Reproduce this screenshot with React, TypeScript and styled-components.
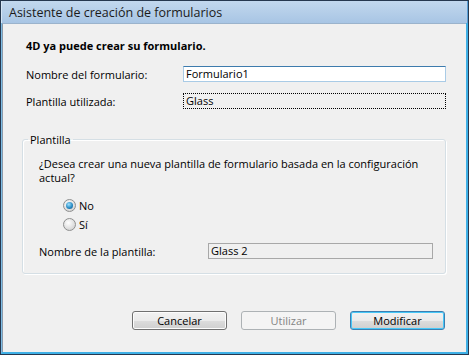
import React from 'react';
import styled, { createGlobalStyle } from 'styled-components';

const Global = createGlobalStyle`
  html, body { margin: 0; padding: 0; background: #f0f0f0; }
  body {
    width: 469px; height: 355px; overflow: hidden;
    font-family: "Open Sans", "Noto Sans", sans-serif;
    font-size: 11px; color: #000;
  }
  * { box-sizing: border-box; }
`;

const Window = styled.div`
  width: 469px;
  height: 355px;
  display: flex;
  flex-direction: column;
  border: 1px solid #26384f;
  background: #f0f0f0;
`;

const TitleBar = styled.div`
  height: 22px;
  flex: none;
  display: flex;
  align-items: center;
  padding-left: 7px;
  background: linear-gradient(#c2d8ee, #a8c5e4);
  border-left: 1px solid #d6e6f5;
  border-right: 1px solid #5a9fd6;
  font-size: 12.5px;
  color: #1b1b1b;
`;

const Frame = styled.div`
  flex: 1;
  display: flex;
  border-left: 1px solid #7dbde6;
  border-right: 2px solid #3fb0e6;
  border-bottom: 2px solid #3fb0e6;
`;

const Client = styled.div`
  flex: 1;
  display: flex;
  flex-direction: column;
  border-left: 1px solid #8a9aab;
  border-top: 1px solid #9bb3cc;
  background: #f0f0f0;
  padding: 0 20px 0 23px;
`;

const Heading = styled.div`
  font-weight: 700;
  line-height: 15px;
  margin-top: 14px;
`;

const FieldRow = styled.div<{ $gap: number }>`
  display: flex;
  align-items: center;
  height: 16px;
  margin-top: ${p => p.$gap}px;
`;

const Label = styled.span<{ $w: number }>`
  width: ${p => p.$w}px;
  flex: none;
  line-height: 15px;
`;

const TextInput = styled.div`
  flex: 1;
  height: 16px;
  background: #fff;
  border: 1px solid #a9cbe6;
  border-top-color: #3d7bad;
  padding-left: 2px;
  line-height: 14px;
`;

const DottedBox = styled.div`
  flex: 1;
  height: 16px;
  border: 1px dotted #000;
  padding-left: 2px;
  line-height: 14px;
`;

const GroupBox = styled.fieldset`
  margin: 23px 0 0 -4px;
  width: 424px;
  border: 1px solid #d5dfe5;
  border-radius: 3px;
  box-shadow: inset 1px 1px 0 #fff, 1px 1px 0 #fff;
  padding: 10px 12px 14px 16px;
  min-inline-size: 0;
`;

const Legend = styled.legend`
  padding: 0 2px;
  margin-left: -11px;
  line-height: 15px;
`;

const Question = styled.div`
  line-height: 14px;
`;

const RadioRow = styled.label<{ $gap: number }>`
  display: flex;
  align-items: center;
  height: 16px;
  margin-top: ${p => p.$gap}px;
  margin-left: 24px;
  gap: 3px;
`;

const RadioDot = styled.span<{ $on: boolean }>`
  width: 13px;
  height: 13px;
  border-radius: 50%;
  border: 1px solid #8e8f8f;
  background: radial-gradient(circle at 40% 35%, #ffffff, #d8d8d8 70%, #cfcfcf);
  display: flex;
  align-items: center;
  justify-content: center;
  &::after {
    content: '';
    display: ${p => (p.$on ? 'block' : 'none')};
    width: 7px;
    height: 7px;
    border-radius: 50%;
    background: radial-gradient(circle at 40% 35%, #9fe2ff, #2a8cc4 55%, #0f4f82);
  }
`;

const ReadonlyBox = styled.div`
  flex: 1;
  height: 16px;
  border: 1px solid #a8a8a8;
  background: #f0f0f0;
  padding-left: 2px;
  line-height: 14px;
`;

const ButtonBar = styled.div`
  display: flex;
  justify-content: flex-end;
  gap: 14px;
  margin-top: 37px;
  padding-right: 1px;
`;

const Button = styled.button<{ $default?: boolean }>`
  width: 95px;
  height: 19px;
  padding: 0;
  font-family: inherit;
  font-size: 11px;
  line-height: 15px;
  color: #000;
  border-radius: 3px;
  border: 1px solid ${p => (p.$default ? '#3c7fb1' : '#707070')};
  background: linear-gradient(#f2f2f2 0%, #ebebeb 50%, #dddddd 51%, #cfcfcf 100%);
  box-shadow: ${p => (p.$default ? 'inset 0 0 0 1px #47c8f8' : 'inset 0 0 0 1px #fcfcfc')};
  &:disabled {
    color: #838383;
    border-color: #adb2b5;
    background: #f4f4f4;
    box-shadow: none;
  }
`;

export default function App() {
  return (
    <>
      <Global />
      <Window>
        <TitleBar>Asistente de creación de formularios</TitleBar>
        <Frame>
          <Client>
            <Heading>4D ya puede crear su formulario.</Heading>
            <FieldRow $gap={13}>
              <Label $w={157}>Nombre del formulario:</Label>
              <TextInput>Formulario1</TextInput>
            </FieldRow>
            <FieldRow $gap={11}>
              <Label $w={157}>Plantilla utilizada:</Label>
              <DottedBox>Glass</DottedBox>
            </FieldRow>
            <GroupBox>
              <Legend>Plantilla</Legend>
              <Question>
                ¿Desea crear una nueva plantilla de formulario basada en la configuración actual?
              </Question>
              <RadioRow $gap={12}>
                <RadioDot $on />
                No
              </RadioRow>
              <RadioRow $gap={3}>
                <RadioDot $on={false} />
                Sí
              </RadioRow>
              <FieldRow $gap={11}>
                <Label $w={169}>Nombre de la plantilla:</Label>
                <ReadonlyBox>Glass 2</ReadonlyBox>
              </FieldRow>
            </GroupBox>
            <ButtonBar>
              <Button>Cancelar</Button>
              <Button disabled>Utilizar</Button>
              <Button $default>Modificar</Button>
            </ButtonBar>
          </Client>
        </Frame>
      </Window>
    </>
  );
}
